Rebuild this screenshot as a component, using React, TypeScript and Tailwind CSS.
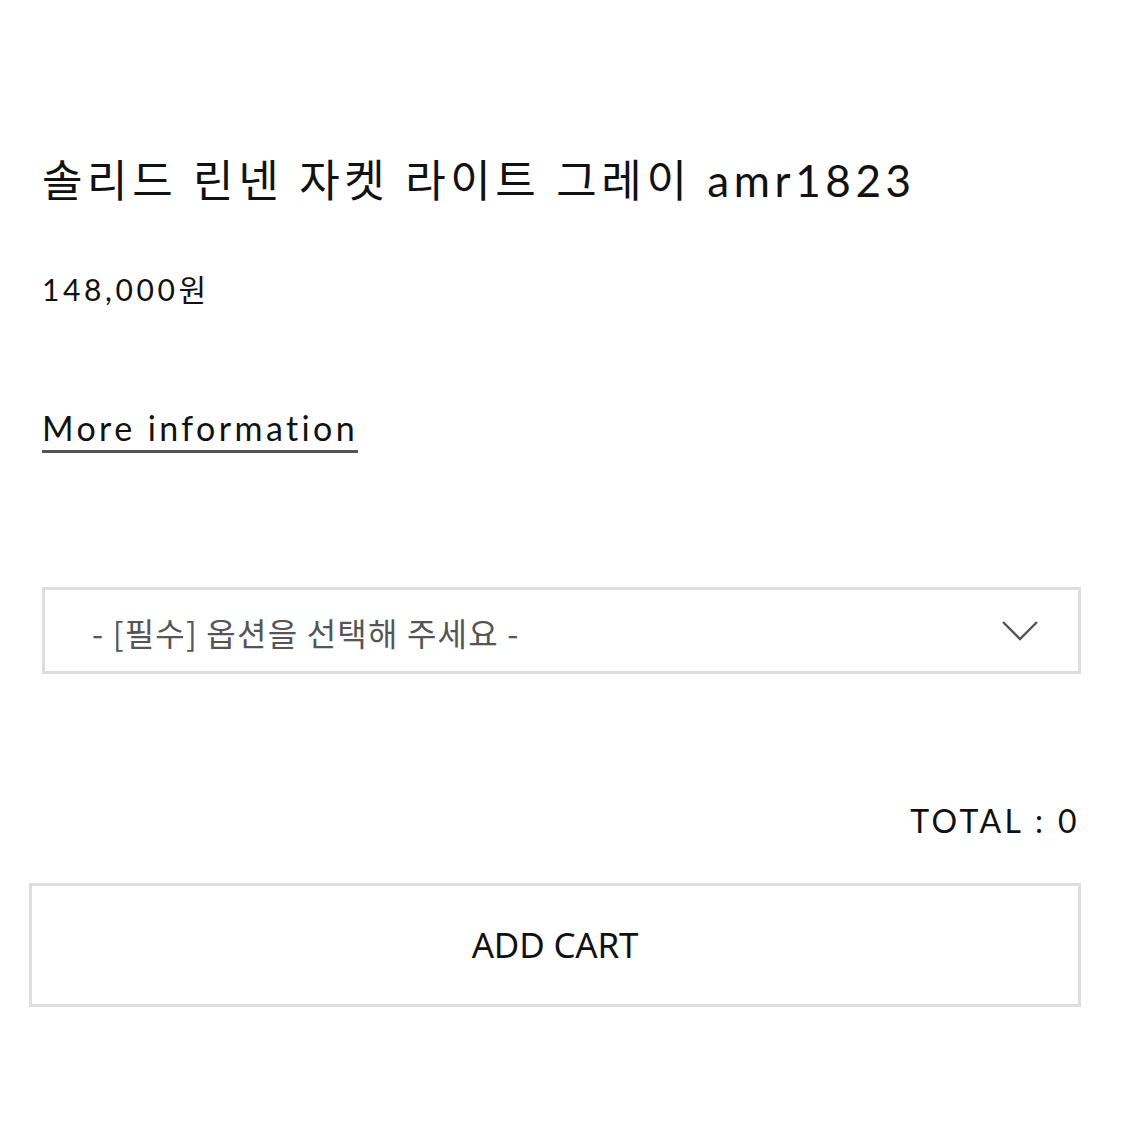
import React, { FC, useState } from "react";

const options = ["- [필수] 옵션을 선택해 주세요 -", "라이트 그레이 / M", "라이트 그레이 / L"];

const ProductInfo: FC = () => {
  const [selected, setSelected] = useState(0);

  return (
    <div className="min-h-[1125px] bg-white text-[#111] font-['Lato','Noto_Sans_CJK_KR',sans-serif]">
      <div className="pt-[150px] pl-[42px] pr-[44px]">
        <h1 className="text-[44px] leading-[60px] tracking-[4.6px] font-normal">
          솔리드 린넨 자켓 라이트 그레이 amr1823
        </h1>

        <p className="mt-[59px] text-[30px] leading-[40px] tracking-[3.6px]">148,000원</p>

        <div className="mt-[99px]">
          <a className="inline-block border-b-[3px] border-[#555] text-[34px] leading-[40px] tracking-[3.4px] pb-[2px]">
            More information
          </a>
        </div>

        <div className="mt-[134px] relative h-[87px] border-[3px] border-[#dedede] flex items-center">
          <select
            value={selected}
            onChange={(e) => setSelected(Number(e.target.value))}
            className="appearance-none w-full h-full bg-transparent pl-[47px] pt-[2px] text-[32px] text-[#555] outline-none font-['Noto_Sans_CJK_KR',sans-serif] tracking-[1.2px]"
          >
            {options.map((opt, i) => (
              <option key={i} value={i}>
                {opt}
              </option>
            ))}
          </select>
          <svg
            className="absolute right-[40px] top-1/2 -translate-y-1/2 pointer-events-none"
            width="36"
            height="20"
            viewBox="0 0 36 20"
            fill="none"
            stroke="#555"
            strokeWidth="2.4"
          >
            <path d="M1 1 L18 18 L35 1" />
          </svg>
        </div>

        <div className="mt-[127px] flex justify-end pr-[1px] text-[32px] leading-[40px] tracking-[3.4px]">
          TOTAL : 0
        </div>
      </div>

      <div className="mt-[42px] ml-[29px] mr-[44px]">
        <button
          type="button"
          className="w-full h-[124px] border-[3px] border-[#dedede] bg-white text-[35px] tracking-[-0.2px] text-[#111] font-['Noto_Sans',sans-serif]"
        >
          ADD CART
        </button>
      </div>
    </div>
  );
};

export default ProductInfo;
